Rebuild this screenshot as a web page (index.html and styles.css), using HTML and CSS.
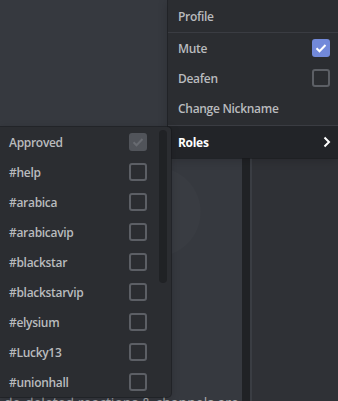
FILE: index.html
```html
<!DOCTYPE html>
<html lang="en">
<head>
    <meta charset="UTF-8">
    <meta name="viewport" content="width=device-width, initial-scale=1.0">
    <title>Roles menu</title>
    <link rel="stylesheet" href="styles.css">
</head>
<body>

<div class="app">
    <div class="backdrop">
        <div class="chat">
            <p class="message">de-deleted reactions &amp; channels are cleared</p>
        </div>
        <div class="divider"></div>
        <div class="edge"></div>
        <div class="members"></div>
    </div>

    <div class="menu main-menu">
        <div class="item item-tall">Profile</div>
        <div class="separator"></div>
        <div class="item">Mute <span class="box checked"><svg viewBox="0 0 18 18"><path d="M4.5 9.2l3 3 6-6.2"/></svg></span></div>
        <div class="item">Deafen <span class="box"></span></div>
        <div class="item">Change Nickname</div>
        <div class="separator separator-low"></div>
        <div class="item item-tall item-active">Roles
            <svg class="chevron" viewBox="0 0 8 12"><path d="M1.5 1.5l4.5 4.5-4.5 4.5"/></svg>
        </div>
    </div>

    <div class="menu roles-menu">
        <div class="roles">
            <div class="item">Approved <span class="box disabled"><svg viewBox="0 0 18 18"><path d="M4.5 9.2l3 3 6-6.2"/></svg></span></div>
            <div class="item">#help <span class="box"></span></div>
            <div class="item">#arabica <span class="box"></span></div>
            <div class="item">#arabicavip <span class="box"></span></div>
            <div class="item">#blackstar <span class="box"></span></div>
            <div class="item">#blackstarvip <span class="box"></span></div>
            <div class="item">#elysium <span class="box"></span></div>
            <div class="item">#Lucky13 <span class="box"></span></div>
            <div class="item">#unionhall <span class="box"></span></div>
        </div>
        <div class="scroller"><div class="thumb"></div></div>
    </div>
</div>

</body>
</html>
```

FILE: styles.css
```css
body {
    margin: 0;
    font-family: "Open Sans", "Noto Sans", sans-serif;
    background-color: #36393f;
    overflow: hidden;
}
.app {
    position: relative;
    width: 338px;
    height: 401px;
    overflow: hidden;
}
.backdrop {
    display: grid;
    grid-template-columns: 242px 8px 2px 1fr;
    height: 401px;
}
.chat {
    display: flex;
    flex-direction: column;
    justify-content: flex-end;
    overflow: hidden;
    background: radial-gradient(circle at 156px 212px, rgba(255, 255, 255, 0.015) 44px, transparent 45px), #36393f;
}
.message {
    margin: 0 0 -10px 4px;
    line-height: 16px;
    font-size: 14px;
    color: #a9abae;
    white-space: nowrap;
}
.divider {
    background-color: #202225;
}
.edge {
    background-color: #3a3d43;
}
.members {
    background-color: #2f3136;
}

.menu {
    position: absolute;
    background-color: #2b2d31;
    box-shadow: 0 0 0 1px rgba(24, 25, 28, 0.6), 0 2px 10px rgba(0, 0, 0, 0.2);
    font-size: 12px;
    font-weight: 600;
    letter-spacing: -0.3px;
    color: #b9bbbe;
}
.main-menu {
    top: 0;
    left: 168px;
    right: 0;
}
.item {
    display: flex;
    align-items: center;
    justify-content: space-between;
    height: 30px;
    padding: 0 8px 0 10px;
}
.item-tall {
    height: 32px;
}
.item-active {
    background-color: #222428;
    color: #ffffff;
    font-weight: 700;
}
.separator {
    height: 1px;
    background-color: #3a3c42;
}
.separator-low {
    margin-top: 2px;
}
.chevron {
    width: 8px;
    height: 12px;
    margin-right: -1px;
    fill: none;
    stroke: #ffffff;
    stroke-width: 2;
}

.box {
    display: block;
    box-sizing: border-box;
    width: 18px;
    height: 18px;
    border: 2px solid #5c5f65;
    border-radius: 3px;
}
.box svg {
    display: block;
    width: 18px;
    height: 18px;
    margin: -2px;
    fill: none;
    stroke-width: 2;
}
.box.checked {
    border-color: #7289da;
    background-color: #7289da;
}
.box.checked svg {
    stroke: #ffffff;
}
.box.disabled {
    border-color: #51545a;
    background-color: #51545a;
}
.box.disabled svg {
    stroke: #686b71;
}

.roles-menu {
    top: 127px;
    left: 0;
    width: 171px;
    display: flex;
    border-radius: 0 4px 4px 0;
}
.roles {
    flex: 1;
}
.roles .item {
    padding: 0 8px 0 9px;
}
.scroller {
    width: 8px;
    margin: 3px 4px 0 4px;
}
.thumb {
    height: 153px;
    background-color: #202225;
    border-radius: 4px;
}
```
